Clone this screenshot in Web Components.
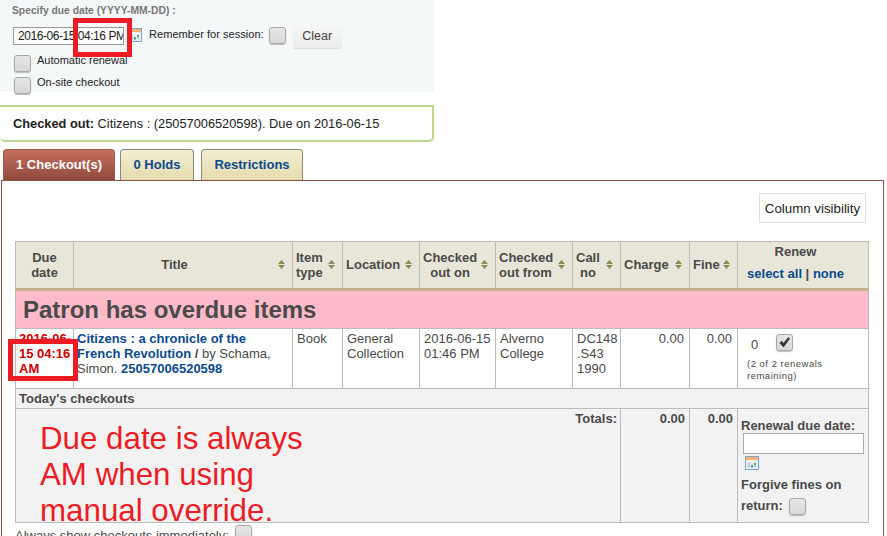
<!DOCTYPE html>
<html>
<head>
<meta charset="utf-8">
<style>
  html, body { margin: 0; padding: 0; height: 536px; overflow: hidden; background: #fff; }
  body { font-family: "Liberation Sans", Arial, sans-serif; font-size: 13px; color: #4a4a4a; position: relative; }
</style>
</head>
<body>
<checkout-form></checkout-form>
<checkout-message></checkout-message>
<patron-tabs></patron-tabs>
<checkout-panel></checkout-panel>
<red-box style="left:73px;top:18px;width:59px;height:39px"></red-box>
<red-box style="left:8px;top:339px;width:70px;height:42px"></red-box>
<red-note>Due date is always<br>AM when using<br>manual override.</red-note>

<script>
class CheckBox extends HTMLElement {
  constructor () {
    super()
    this.shadow = this.attachShadow({ mode: 'open' })
  }
  connectedCallback () {
    const tick = this.hasAttribute('checked')
      ? '<svg width="13" height="13" viewBox="0 0 13 13"><path d="M1.5 7 L3.8 4.8 L5.4 7 L10.4 1.2 L12 2.6 L5.6 11.6 Z" fill="#333"/></svg>'
      : ''
    this.shadow.innerHTML = /*html*/`
      <style>
        :host {
          display: inline-flex;
          align-items: center;
          justify-content: center;
          box-sizing: border-box;
          width: 17px;
          height: 17px;
          flex: none;
          border: 1px solid #a9a9a9;
          border-radius: 3px;
          background: linear-gradient(#e6e6e6, #d8d8d8);
          box-shadow: 0 1px 1px #bbb;
        }
      </style>
      ${tick}
    `
  }
}
customElements.define('check-box', CheckBox)

class CalendarIcon extends HTMLElement {
  constructor () {
    super()
    this.shadow = this.attachShadow({ mode: 'open' })
    this.shadow.innerHTML = /*html*/`
      <style>
        :host { display: inline-block; width: 14px; height: 14px; flex: none; line-height: 0; }
      </style>
      <svg width="14" height="14" viewBox="0 0 14 14">
        <rect x="0.5" y="0.5" width="13" height="13" fill="#e4edf7" stroke="#7ba4d9"/>
        <rect x="1" y="1" width="12" height="3" fill="#f7b26e"/>
        <path d="M2 5h10v1H2z" fill="#fff"/>
        <path d="M3 7h2v1.5H3zM3 9.5h2V11H3zM9 9.5h2V11H9z" fill="#a9bdd3"/>
        <path d="M6 9h2v2.5H6zM9 7h2v2H9z" fill="#5aa65a"/>
      </svg>
    `
  }
}
customElements.define('calendar-icon', CalendarIcon)

class SortArrows extends HTMLElement {
  constructor () {
    super()
    this.shadow = this.attachShadow({ mode: 'open' })
    this.shadow.innerHTML = /*html*/`
      <style>
        :host { display: inline-block; width: 7px; height: 9px; flex: none; line-height: 0; }
      </style>
      <svg width="7" height="9" viewBox="0 0 7 9">
        <path d="M3.5 0 L7 4 L0 4 Z M0 5 L7 5 L3.5 9 Z" fill="#8b8b55"/>
      </svg>
    `
  }
}
customElements.define('sort-arrows', SortArrows)

class CheckoutForm extends HTMLElement {
  constructor () {
    super()
    this.shadow = this.attachShadow({ mode: 'open' })
    this.shadow.innerHTML = /*html*/`
      <style>
        :host {
          display: block;
          box-sizing: border-box;
          width: 434px;
          height: 92px;
          background: #f4f8f9;
          padding: 5px 0 0 12px;
          color: #222;
        }
        .legend { font-size: 10.3px; font-weight: bold; color: #777; height: 19px; }
        .row { display: flex; align-items: center; }
        .date {
          box-sizing: border-box;
          width: 111px;
          height: 18px;
          margin-left: 1px;
          border: 1px solid #999;
          background: #fff;
          font-size: 12px;
          line-height: 16px;
          padding-left: 4px;
          white-space: nowrap;
          overflow: hidden;
          letter-spacing: -0.45px;
        }
        calendar-icon { margin: 0 7px 0 4px; position: relative; top: -1px; }
        .remember { font-size: 11.1px; margin-right: 5px; position: relative; top: -2px; }
        .check { position: relative; top: -1px; }
        .clear {
          margin-left: 7px;
          width: 49px;
          height: 24px;
          border-radius: 2px;
          background: linear-gradient(#f7f7f7, #ececec);
          box-shadow: 0 1px 1px #ddd;
          font-size: 12.5px;
          line-height: 25px;
          text-align: center;
          color: #444;
        }
        .opt { display: flex; align-items: flex-start; gap: 6px; margin-left: 2px; height: 22px; font-size: 11px; }
        .opt span { position: relative; top: -1px; }
        .first { margin-top: 7px; }
      </style>
      <div class="legend">Specify due date (YYYY-MM-DD) :</div>
      <div class="row">
        <div class="date">2016-06-15 04:16 PM</div>
        <calendar-icon></calendar-icon>
        <span class="remember">Remember for session:</span>
        <check-box class="check"></check-box>
        <div class="clear">Clear</div>
      </div>
      <div class="opt first"><check-box></check-box><span>Automatic renewal</span></div>
      <div class="opt"><check-box></check-box><span>On-site checkout</span></div>
    `
  }
}
customElements.define('checkout-form', CheckoutForm)

class CheckoutMessage extends HTMLElement {
  constructor () {
    super()
    this.shadow = this.attachShadow({ mode: 'open' })
    this.shadow.innerHTML = /*html*/`
      <style>
        :host {
          display: block;
          box-sizing: border-box;
          width: 434px;
          height: 37px;
          margin-top: 13px;
          border: solid #bcd88e;
          border-width: 2px 2px 2px 0;
          border-radius: 0 0 5px 5px;
          padding-left: 13px;
          font-size: 12.8px;
          line-height: 33px;
          color: #222;
        }
      </style>
      <b>Checked out:</b> Citizens : (25057006520598). Due on 2016-06-15
    `
  }
}
customElements.define('checkout-message', CheckoutMessage)

class PatronTabs extends HTMLElement {
  constructor () {
    super()
    this.shadow = this.attachShadow({ mode: 'open' })
    this.shadow.innerHTML = /*html*/`
      <style>
        :host {
          display: flex;
          box-sizing: border-box;
          height: 31px;
          margin-top: 7px;
          padding-left: 3px;
          font-size: 13px;
          font-weight: bold;
        }
        .tab {
          box-sizing: border-box;
          height: 31px;
          border: 1px solid #8a8a7a;
          border-bottom: none;
          border-radius: 4px 4px 0 0;
          background: linear-gradient(#f3eed2, #e4dcae);
          color: #0b4a8f;
          line-height: 30px;
          text-align: center;
        }
        .active {
          border-color: #a05a4c;
          background: linear-gradient(#c4705f, #8f4a3c);
          color: #fff;
          width: 112px;
        }
        .holds { width: 74px; margin-left: 5px; }
        .restrictions { width: 102px; margin-left: 7px; }
      </style>
      <div class="tab active">1 Checkout(s)</div>
      <div class="tab holds">0 Holds</div>
      <div class="tab restrictions">Restrictions</div>
    `
  }
}
customElements.define('patron-tabs', PatronTabs)

class CheckoutPanel extends HTMLElement {
  constructor () {
    super()
    this.shadow = this.attachShadow({ mode: 'open' })
    this.shadow.innerHTML = /*html*/`
      <style>
        :host {
          display: block;
          box-sizing: border-box;
          width: 883px;
          height: 400px;
          margin-left: 1px;
          border: 1px solid #8c4f44;
          border-bottom: none;
          padding: 12px 0 0 13px;
          font-size: 13px;
          color: #4a4a4a;
        }
        .tools { display: flex; justify-content: flex-end; padding-right: 17px; height: 48px; }
        .visibility {
          box-sizing: border-box;
          width: 107px;
          height: 30px;
          border: 1px solid #ddd;
          font-size: 13.3px;
          line-height: 29px;
          text-align: center;
          color: #222;
        }
        table { border-collapse: collapse; table-layout: fixed; width: 853px; }
        th, td { border: 1px solid #bcbcbc; padding: 1px 4px 2px; vertical-align: top; line-height: 15px; }
        thead th { background: #e8e6d8; vertical-align: middle; height: 43px; border-bottom: 3px solid #c4b08a; padding: 1px 7px 2px 3px; }
        .sortable { display: flex; align-items: center; justify-content: space-between; gap: 3px; }
        .center { text-align: center; flex: 1; }
        .sortable .center { padding-right: 3px; }
        thead th.renew-head { height: 41px; padding: 0 18px 5px 3px; }
        thead th.due-head { padding-right: 3px; }
        .overdue td {
          background: #ffbbca;
          font-size: 24px;
          font-weight: bold;
          line-height: 30px;
          height: 31px;
          padding: 4px 7px 2px;
        }
        .item td { height: 55px; padding-top: 2px; }
        .item td.due { color: #c00; font-weight: bold; padding-left: 3px; padding-right: 0; }
        .item td.title { padding-left: 3px; }
        a { color: #0b4a8f; font-weight: bold; text-decoration: none; }
        .num { text-align: right; }
        .item .num { padding-right: 5px; }
        .renew-top { display: flex; align-items: center; padding: 3px 0 0 9px; gap: 18px; }
        .renew-top span { position: relative; top: 2px; }
        small { display: block; font-size: 9.5px; line-height: 12px; margin-top: 7px; letter-spacing: 0.5px; padding-left: 5px; }
        .gray td { background: #f2f2f2; font-weight: bold; }
        .today td { height: 16px; padding: 2px 3px 1px; }
        .totals td { height: 109px; padding-top: 2px; }
        .totals .sum { padding-right: 3px; }
        .totals td.renew-foot { padding-left: 3px; }
        .label { display: block; margin-top: 7px; }
        .renew-date {
          box-sizing: border-box;
          width: 121px;
          height: 21px;
          margin: 0 0 2px 2px;
          border: 1px solid #aaa;
          background: #fff;
        }
        .cal { margin-left: 4px; }
        .forgive { margin-top: 1px; line-height: 21px; }
        .forgive check-box { vertical-align: middle; margin-left: 2px; }
        .always { margin-top: 2px; display: flex; gap: 6px; align-items: flex-start; }
        .always span { padding-top: 3px; }
      </style>
      <div class="tools"><div class="visibility">Column visibility</div></div>
      <table>
        <colgroup>
          <col style="width:58px"><col style="width:219px"><col style="width:50px"><col style="width:77px">
          <col style="width:76px"><col style="width:77px"><col style="width:48px"><col style="width:69px">
          <col style="width:48px"><col style="width:131px">
        </colgroup>
        <thead>
          <tr>
            <th class="due-head"><div class="center">Due<br>date</div></th>
            <th><div class="sortable"><span class="center">Title</span><sort-arrows></sort-arrows></div></th>
            <th><div class="sortable"><span>Item<br>type</span><sort-arrows></sort-arrows></div></th>
            <th><div class="sortable"><span>Location</span><sort-arrows></sort-arrows></div></th>
            <th><div class="sortable"><span>Checked<br>out on</span><sort-arrows></sort-arrows></div></th>
            <th><div class="sortable"><span style="text-align:left">Checked<br>out from</span><sort-arrows></sort-arrows></div></th>
            <th><div class="sortable"><span>Call<br>no</span><sort-arrows></sort-arrows></div></th>
            <th><div class="sortable"><span>Charge</span><sort-arrows></sort-arrows></div></th>
            <th><div class="sortable"><span>Fine</span><sort-arrows></sort-arrows></div></th>
            <th class="renew-head">Renew<div style="margin-top:7px"><a>select all</a> | <a>none</a></div></th>
          </tr>
        </thead>
        <tbody>
          <tr class="overdue"><td colspan="10">Patron has overdue items</td></tr>
          <tr class="item">
            <td class="due">2016-06-<br>15 04:16<br>AM</td>
            <td class="title"><a>Citizens : a chronicle of the French Revolution</a> <b>/</b> by Schama, Simon. <a>25057006520598</a></td>
            <td>Book</td>
            <td>General Collection</td>
            <td>2016-06-15 01:46 PM</td>
            <td>Alverno College</td>
            <td>DC148 .S43 1990</td>
            <td class="num">0.00</td>
            <td class="num">0.00</td>
            <td>
              <div class="renew-top"><span>0</span><check-box checked></check-box></div>
              <small>(2 of 2 renewals remaining)</small>
            </td>
          </tr>
          <tr class="gray today"><td colspan="10">Today's checkouts</td></tr>
          <tr class="gray totals">
            <td colspan="7" class="num sum">Totals:</td>
            <td class="num">0.00</td>
            <td class="num">0.00</td>
            <td class="renew-foot">
              <span class="label">Renewal due date:</span>
              <div class="renew-date"></div>
              <calendar-icon class="cal"></calendar-icon>
              <div class="forgive">Forgive fines on<br>return: <check-box></check-box></div>
            </td>
          </tr>
        </tbody>
      </table>
      <div class="always"><span>Always show checkouts immediately:</span><check-box></check-box></div>
    `
  }
}
customElements.define('checkout-panel', CheckoutPanel)

// annotations drawn over the screenshot
class RedBox extends HTMLElement {
  constructor () {
    super()
    this.shadow = this.attachShadow({ mode: 'open' })
    this.shadow.innerHTML = /*html*/`
      <style>
        :host { display: block; position: absolute; box-sizing: border-box; border: 5px solid #ed1c24; }
      </style>
    `
  }
}
customElements.define('red-box', RedBox)

class RedNote extends HTMLElement {
  constructor () {
    super()
    this.shadow = this.attachShadow({ mode: 'open' })
    this.shadow.innerHTML = /*html*/`
      <style>
        :host {
          display: block;
          position: absolute;
          left: 40px;
          top: 421px;
          font-size: 31.3px;
          line-height: 36px;
          color: #ed1c24;
          white-space: nowrap;
        }
      </style>
      <slot></slot>
    `
  }
}
customElements.define('red-note', RedNote)
</script>
</body>
</html>
